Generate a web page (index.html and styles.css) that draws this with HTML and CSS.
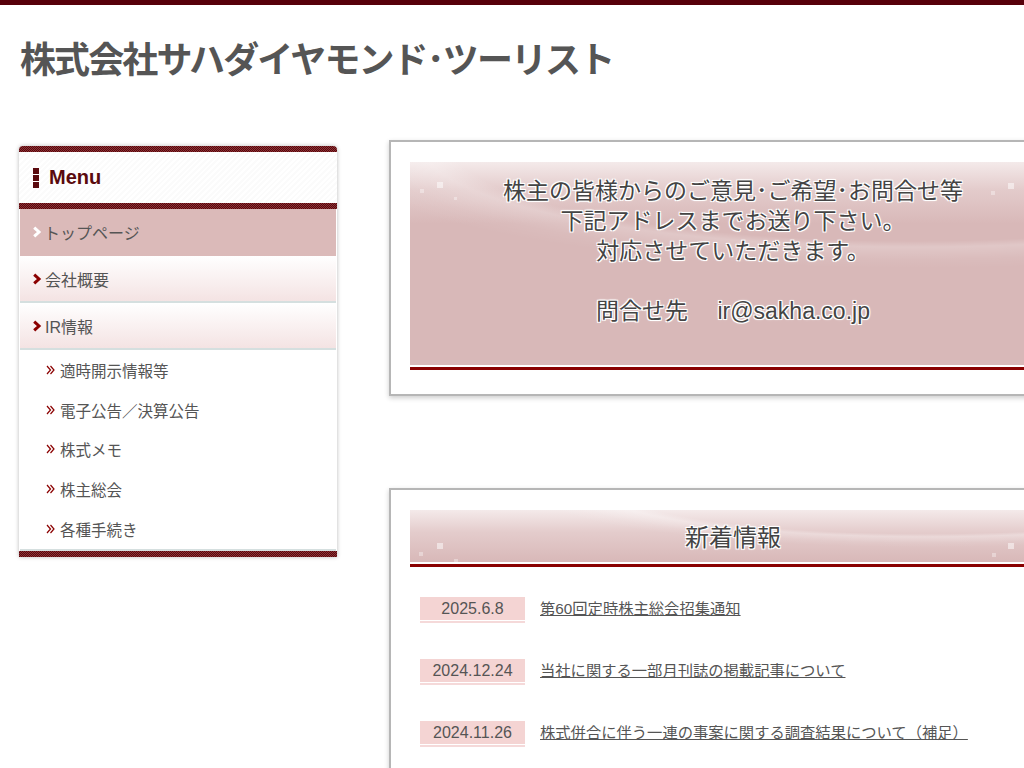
FILE: index.html
```html
<!DOCTYPE html>
<html lang="ja">
<head>
<meta charset="utf-8">
<title>株式会社サハダイヤモンド･ツーリスト</title>
<link rel="stylesheet" href="styles.css">
</head>
<body>
<div class="topbar"></div>
<header class="site-header">
  <h1 class="site-title">株式会社サハダイヤモンド･ツーリスト</h1>
</header>
<div class="layout">
  <nav class="sidenav">
    <div class="stripe"></div>
    <div class="nav-head">
      <span class="nav-icon"><i></i><i></i><i></i></span>
      <span class="nav-title">Menu</span>
    </div>
    <div class="stripe"></div>
    <ul class="nav-main">
      <li class="nav-item active"><a href="#"><svg class="chev" width="10" height="12" viewBox="0 0 10 12"><polyline points="2.2,1.6 7,6 2.2,10.4" fill="none" stroke="#fff" stroke-width="3"/></svg>トップページ</a></li>
      <li class="nav-item"><a href="#"><svg class="chev" width="10" height="12" viewBox="0 0 10 12"><polyline points="2.2,1.6 7,6 2.2,10.4" fill="none" stroke="#8b0000" stroke-width="3"/></svg>会社概要</a></li>
      <li class="nav-item"><a href="#"><svg class="chev" width="10" height="12" viewBox="0 0 10 12"><polyline points="2.2,1.6 7,6 2.2,10.4" fill="none" stroke="#8b0000" stroke-width="3"/></svg>IR情報</a></li>
    </ul>
    <ul class="nav-sub">
      <li><a href="#"><svg class="dchev" width="9" height="10" viewBox="0 0 9 10"><polyline points="1,1 4.5,5 1,9" fill="none" stroke="#8b0000" stroke-width="1.2"/><polyline points="4.5,1 8,5 4.5,9" fill="none" stroke="#8b0000" stroke-width="1.2"/></svg>適時開示情報等</a></li>
      <li><a href="#"><svg class="dchev" width="9" height="10" viewBox="0 0 9 10"><polyline points="1,1 4.5,5 1,9" fill="none" stroke="#8b0000" stroke-width="1.2"/><polyline points="4.5,1 8,5 4.5,9" fill="none" stroke="#8b0000" stroke-width="1.2"/></svg>電子公告／決算公告</a></li>
      <li><a href="#"><svg class="dchev" width="9" height="10" viewBox="0 0 9 10"><polyline points="1,1 4.5,5 1,9" fill="none" stroke="#8b0000" stroke-width="1.2"/><polyline points="4.5,1 8,5 4.5,9" fill="none" stroke="#8b0000" stroke-width="1.2"/></svg>株式メモ</a></li>
      <li><a href="#"><svg class="dchev" width="9" height="10" viewBox="0 0 9 10"><polyline points="1,1 4.5,5 1,9" fill="none" stroke="#8b0000" stroke-width="1.2"/><polyline points="4.5,1 8,5 4.5,9" fill="none" stroke="#8b0000" stroke-width="1.2"/></svg>株主総会</a></li>
      <li><a href="#"><svg class="dchev" width="9" height="10" viewBox="0 0 9 10"><polyline points="1,1 4.5,5 1,9" fill="none" stroke="#8b0000" stroke-width="1.2"/><polyline points="4.5,1 8,5 4.5,9" fill="none" stroke="#8b0000" stroke-width="1.2"/></svg>各種手続き</a></li>
    </ul>
    <div class="stripe"></div>
  </nav>

  <main class="content">
    <section class="panel">
      <div class="banner banner-contact">
        <p>株主の皆様からのご意見･ご希望･お問合せ等<br>下記アドレスまでお送り下さい。<br>対応させていただきます。<br><br>問合せ先　 ir@sakha.co.jp</p>
      </div>
    </section>

    <section class="panel">
      <h2 class="banner banner-news">新着情報</h2>
      <ul class="news">
        <li class="news-item"><span class="news-date">2025.6.8</span><a class="news-link" href="#">第60回定時株主総会招集通知</a></li>
        <li class="news-item"><span class="news-date">2024.12.24</span><a class="news-link" href="#">当社に関する一部月刊誌の掲載記事について</a></li>
        <li class="news-item"><span class="news-date">2024.11.26</span><a class="news-link" href="#">株式併合に伴う一連の事案に関する調査結果について（補足）</a></li>
      </ul>
    </section>
  </main>
</div>
</body>
</html>
```

FILE: styles.css
```css
html {
  scrollbar-width: none;
  overflow-x: hidden;
}

body {
  margin: 0;
  background: #fff;
  color: #555;
  font-family: "Liberation Sans", "Noto Sans CJK JP", sans-serif;
}

a {
  color: inherit;
}

.topbar {
  height: 5px;
  background: #57000a;
}

.site-header {
  padding: 38px 0 0 20px;
}

.site-title {
  margin: 0;
  font-size: 36px;
  line-height: 36px;
  font-weight: 700;
  letter-spacing: -1.9px;
  color: #555;
  white-space: nowrap;
}

.layout {
  display: flex;
  align-items: flex-start;
  gap: 52px;
  width: 1100px;
  margin-top: 61px;
  padding-left: 19px;
}

/* ---------- side navigation ---------- */
.sidenav {
  flex: none;
  width: 318px;
  margin-top: 6px;
  background: #fff;
  border-radius: 4px 4px 0 0;
  overflow: hidden;
  box-shadow: 0 0 4px rgba(0, 0, 0, 0.28);
}

.stripe {
  height: 6px;
  background: repeating-conic-gradient(#55080c 0 25%, #8e3236 0 50%) 0 0 / 2px 2px;
}

.nav-head {
  display: flex;
  align-items: center;
  gap: 10px;
  height: 51px;
  padding-left: 14px;
  background: repeating-linear-gradient(-45deg, #fff 0 2px, #fbfbfb 2px 4px);
}

.nav-icon {
  display: flex;
  flex-direction: column;
  gap: 1px;
  width: 6px;
}

.nav-icon i {
  display: block;
  height: 6px;
  background: #5a0a0e;
}

.nav-title {
  font-size: 20px;
  font-weight: 700;
  color: #5a0a0e;
}

.nav-main,
.nav-sub {
  list-style: none;
  margin: 0 1px;
  padding: 0;
}

.nav-item a {
  display: flex;
  align-items: center;
  gap: 3px;
  height: 45px;
  padding-left: 12px;
  font-size: 16px;
  color: #555;
  text-decoration: none;
  background: linear-gradient(#fff, #f4e3e3);
  border-bottom: 2px solid #d5dfdf;
}

.nav-item.active a {
  background: #dbbab9;
  border-bottom-color: #dbbab9;
  gap: 2px;
}

.chev {
  display: block;
  flex: none;
}

.nav-sub {
  border-bottom: 2px solid #d5dfdf;
}

.nav-sub li a {
  display: flex;
  align-items: center;
  gap: 5px;
  height: 39.8px;
  padding-left: 26px;
  font-size: 15.5px;
  color: #555;
  text-decoration: none;
}

.dchev {
  display: block;
  flex: none;
}

/* ---------- main content ---------- */
.content {
  flex: none;
  width: 688px;
  display: flex;
  flex-direction: column;
  gap: 92px;
}

.panel {
  background: #fff;
  border: 2px solid #b6b6b6;
  box-shadow: 0 2px 5px rgba(0, 0, 0, 0.2);
  padding: 20px 19px 24px;
}

.banner {
  margin: 0;
  text-align: center;
  font-weight: 400;
  color: #444;
  text-shadow: 1px 1px 0 #fff, -1px -1px 0 #fff, 1px -1px 0 #fff, -1px 1px 0 #fff, 0 0 3px #fff;
  border-bottom: 3px solid #8a0000;
  box-shadow: inset 0 -2px 0 #fff;
}

.banner-contact {
  padding: 14px 0 41px;
  font-size: 23px;
  line-height: 30px;
  background:
    linear-gradient(rgba(255,255,255,.35), rgba(255,255,255,.35)) 10px 27px / 4px 4px no-repeat,
    linear-gradient(rgba(255,255,255,.5), rgba(255,255,255,.5)) 27px 20px / 6px 6px no-repeat,
    linear-gradient(rgba(255,255,255,.35), rgba(255,255,255,.35)) 44px 35px / 3px 3px no-repeat,
    linear-gradient(rgba(255,255,255,.35), rgba(255,255,255,.35)) 581px 29px / 4px 4px no-repeat,
    linear-gradient(rgba(255,255,255,.5), rgba(255,255,255,.5)) 598px 21px / 6px 6px no-repeat,
    radial-gradient(ellipse 115% 75% at 78% -8%, rgba(255,255,255,0) 62%, rgba(255,255,255,.22) 66%, rgba(255,255,255,.06) 74%, rgba(255,255,255,0) 80%),
    linear-gradient(to bottom, #f4eaea 0, #e3cbcb 28px, #d8b8b8 62px, #d8b8b8 100%);
}

.banner-contact p {
  margin: 0;
}

.banner-news {
  padding-top: 2px;
  font-size: 24px;
  line-height: 52px;
  background:
    linear-gradient(rgba(255,255,255,.35), rgba(255,255,255,.35)) 9px 42px / 4px 4px no-repeat,
    linear-gradient(rgba(255,255,255,.5), rgba(255,255,255,.5)) 27px 33px / 6px 6px no-repeat,
    linear-gradient(rgba(255,255,255,.35), rgba(255,255,255,.35)) 44px 49px / 4px 4px no-repeat,
    linear-gradient(rgba(255,255,255,.35), rgba(255,255,255,.35)) 582px 43px / 4px 4px no-repeat,
    linear-gradient(rgba(255,255,255,.5), rgba(255,255,255,.5)) 598px 33px / 6px 6px no-repeat,
    radial-gradient(ellipse 80% 140% at 80% -40%, rgba(255,255,255,0) 60%, rgba(255,255,255,.3) 64%, rgba(255,255,255,.08) 72%, rgba(255,255,255,0) 78%),
    linear-gradient(to bottom, #f4eaea 0, #e4cccc 22px, #d8b8b8 52px);
}

.news {
  list-style: none;
  margin: 0;
  padding: 30px 0 0 10px;
}

.news-item {
  display: flex;
  align-items: flex-start;
  gap: 15px;
  margin-bottom: 36px;
}

.news-date {
  flex: none;
  box-sizing: border-box;
  width: 105px;
  height: 26px;
  padding-bottom: 1px;
  line-height: 23px;
  text-align: center;
  font-size: 16px;
  color: #555;
  background: #f4d4d3;
  background-clip: content-box;
  border-bottom: 2px solid #f5d9d9;
}

.news-link {
  font-size: 15.3px;
  line-height: 23px;
  color: #555;
  text-decoration: underline;
  white-space: nowrap;
}
```
